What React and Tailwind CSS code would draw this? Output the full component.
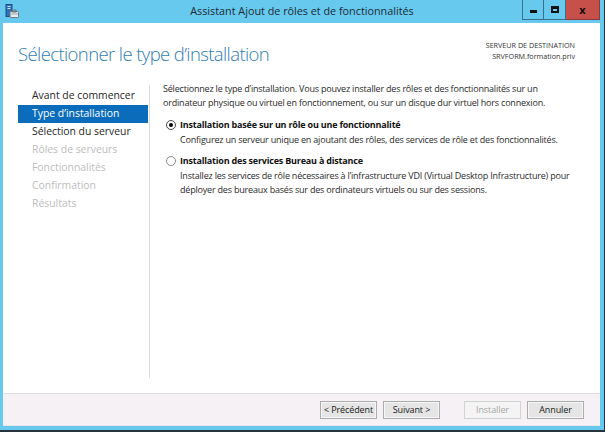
import React from "react";

const font = { fontFamily: '"Open Sans", "Noto Sans", "Liberation Sans", sans-serif' };

function TitleIcon() {
  return (
    <svg width="14" height="14" viewBox="0 0 14 14">
      <rect x="1" y="0.5" width="6" height="12" fill="#2f6fb8" stroke="#1d4f8c" strokeWidth="1" />
      <rect x="2.5" y="2" width="3" height="1" fill="#cfe6fb" />
      <rect x="2.5" y="4" width="3" height="1" fill="#cfe6fb" />
      <rect x="5" y="7.5" width="8.5" height="6" rx="1" fill="#e9eef3" stroke="#6b7680" strokeWidth="1" />
      <rect x="7.5" y="6" width="3.5" height="2" fill="none" stroke="#6b7680" strokeWidth="1" />
      <rect x="5.5" y="9.5" width="7.5" height="1" fill="#9aa3ab" />
    </svg>
  );
}

function Radio({ checked }) {
  return (
    <span className={`w-[10px] h-[10px] rounded-full border flex items-center justify-center bg-white ${checked ? "border-[#4a4a4a]" : "border-[#8c8c8c]"}`}>
      {checked && <span className="w-[4px] h-[4px] rounded-full bg-black" />}
    </span>
  );
}

function Btn({ children, disabled }) {
  return (
    <div
      className={`h-[18px] w-[57px] flex items-center justify-center text-[9px] tracking-[-0.1px] border ${
        disabled
          ? "border-[#d3d3d3] bg-[#f4f4f4] text-[#a6a6a6]"
          : "border-[#acacac] bg-[#e5e5e5] text-[#1a1a1a] shadow-[inset_0_0_0_1px_#f6f6f6]"
      }`}
    >
      {children}
    </div>
  );
}

export default function App() {
  const nav = [
    { t: "Avant de commencer", s: "normal" },
    { t: "Type d’installation", s: "active" },
    { t: "Sélection du serveur", s: "normal" },
    { t: "Rôles de serveurs", s: "dis" },
    { t: "Fonctionnalités", s: "dis" },
    { t: "Confirmation", s: "dis" },
    { t: "Résultats", s: "dis" },
  ];
  return (
    <div className="w-[605px] h-[432px] bg-[#26353d] flex flex-col" style={font}>
      <div className="flex-1 mr-[1px] mb-[2px] bg-[#68c9ee] flex flex-col pl-[3px] pr-[4px] pb-[4px]">
        {/* Title bar */}
        <div className="h-[23px] grid grid-cols-[1fr_auto_1fr] -ml-[3px] -mr-[4px]">
          <div className="pl-[5px] pt-[4px]">
            <TitleIcon />
          </div>
          <div className="pt-[4px] text-[10.8px] text-[#1c2a33] leading-[14px]">
            Assistant Ajout de rôles et de fonctionnalités
          </div>
          <div className="flex justify-end pr-[4px]">
            <div className="w-[22px] h-[20px] border border-[#3b6f8e] border-t-0 flex items-end justify-center pb-[6px]">
              <span className="w-[7px] h-[3px] bg-[#111]" />
            </div>
            <div className="w-[22px] h-[20px] border border-[#3b6f8e] border-t-0 border-l-0 flex items-center justify-center">
              <span className="w-[8px] h-[7px] border-2 border-[#111] border-t-[3px]" />
            </div>
            <div className="w-[34px] h-[20px] bg-[#c7504b] border border-[#8a3a37] border-t-0 border-l-0 flex items-center justify-center text-[11px] font-bold text-[#111] leading-none">
              x
            </div>
          </div>
        </div>

        {/* White main area */}
        <div className="flex-1 bg-white flex flex-col">
          <div className="h-[59px] flex justify-between items-start">
            <div className="pl-[15px] pt-[18px] text-[18.5px] font-light text-[#2f7db3] leading-[26px] tracking-[-0.6px]">
              Sélectionner le type d’installation
            </div>
            <div className="pr-[25px] pt-[17px] text-right text-[7.2px] leading-[11px] text-[#333]">
              <div>SERVEUR DE DESTINATION</div>
              <div>SRVFORM.formation.priv</div>
            </div>
          </div>
          <div className="flex-1 flex">
            <div className="ml-[15px] w-[130px] pt-[5px] flex flex-col">
              {nav.map((n) => (
                <div
                  key={n.t}
                  className={`h-[18px] pl-[14px] flex items-center text-[10.4px] ${
                    n.s === "active"
                      ? "bg-[#0b6cbc] text-white"
                      : n.s === "dis"
                      ? "text-[#bdbdbd]"
                      : "text-[#262626]"
                  }`}
                >
                  {n.t}
                </div>
              ))}
            </div>
            <div className="ml-[1px] mt-[3px] mb-[15px] w-[1px] bg-[#d9d9d9]" />
            <div className="pl-[13px] flex-1 text-[9px] tracking-[-0.2px] leading-[14px] text-[#2a2a2a]">
              <div>
                Sélectionnez le type d’installation. Vous pouvez installer des rôles et des fonctionnalités sur un
                <br />
                ordinateur physique ou virtuel en fonctionnement, ou sur un disque dur virtuel hors connexion.
              </div>
              <div className="mt-[8px] flex items-center gap-[4px] pl-[3px]">
                <Radio checked />
                <span className="font-bold text-[#111]">Installation basée sur un rôle ou une fonctionnalité</span>
              </div>
              <div className="mt-[1px] pl-[17px]">
                Configurez un serveur unique en ajoutant des rôles, des services de rôle et des fonctionnalités.
              </div>
              <div className="mt-[7px] flex items-center gap-[4px] pl-[3px]">
                <Radio />
                <span className="font-bold text-[#111]">Installation des services Bureau à distance</span>
              </div>
              <div className="mt-[1px] pl-[17px]">
                Installez les services de rôle nécessaires à l’infrastructure VDI (Virtual Desktop Infrastructure) pour
                <br />
                déployer des bureaux basés sur des ordinateurs virtuels ou sur des sessions.
              </div>
            </div>
          </div>
        </div>

        {/* Footer */}
        <div className="h-[33px] bg-[#f5f1f5] border-t border-[#dedede] border-b border-b-[#eae6ea] flex justify-end items-start pt-[7px] pr-[16px]">
          <Btn>&lt; Précédent</Btn>
          <div className="w-[6px]" />
          <Btn>Suivant &gt;</Btn>
          <div className="w-[24px]" />
          <Btn disabled>Installer</Btn>
          <div className="w-[6px]" />
          <Btn>Annuler</Btn>
        </div>
      </div>
    </div>
  );
}
